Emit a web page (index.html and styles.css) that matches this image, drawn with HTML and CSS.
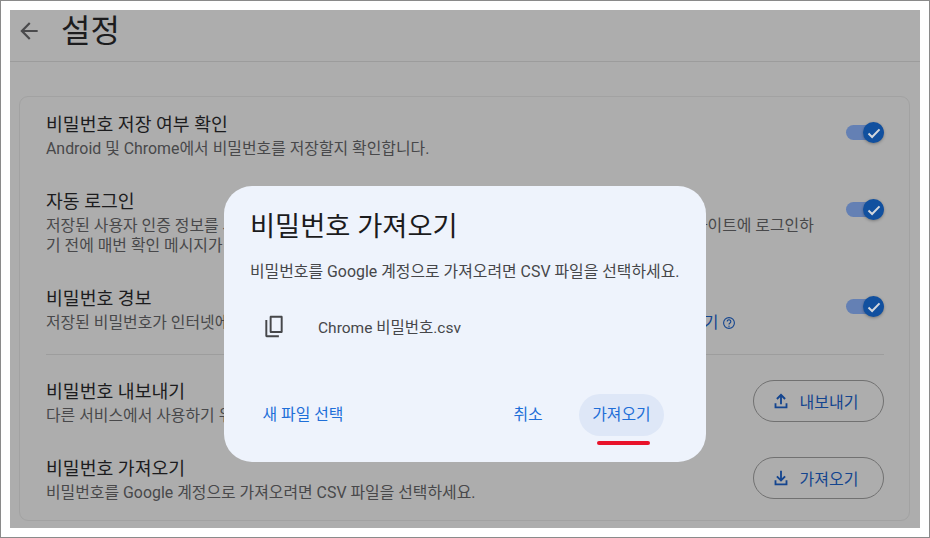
FILE: index.html
```html
<!DOCTYPE html>
<html lang="ko">
<head>
<meta charset="utf-8">
<title>설정</title>
<link rel="stylesheet" href="styles.css">
</head>
<body>
<div class="frame">
  <div class="page">
    <header class="topbar">
      <svg class="back" width="26" height="26" viewBox="0 0 24 24"><path d="M20 11H7.800l5.600-5.600L12 4l-8 8 8 8 1.400-1.400L7.800 13H20z"/></svg>
      <h1>설정</h1>
    </header>
    <main class="card">
      <section class="row">
        <div class="info">
          <h2>비밀번호 저장 여부 확인</h2>
          <p>Android 및 Chrome에서 비밀번호를 저장할지 확인합니다.</p>
        </div>
        <div class="toggle"><span class="knob"><svg width="14" height="14" viewBox="0 0 14 14"><path d="M1.500 7.600l3.600 3.400 7.400-7.600" /></svg></span></div>
      </section>
      <section class="row">
        <div class="info">
          <h2>자동 로그인</h2>
          <p>저장된 사용자 인증 정보를 사용하여 웹사이트에 자동으로 로그인합니다. 사용자가 사용 중지하면 웹사이트에 로그인하<br>기 전에 매번 확인 메시지가 표시됩니다.</p>
        </div>
        <div class="toggle"><span class="knob"><svg width="14" height="14" viewBox="0 0 14 14"><path d="M1.500 7.600l3.600 3.400 7.400-7.600" /></svg></span></div>
      </section>
      <section class="row">
        <div class="info">
          <h2>비밀번호 경보</h2>
          <p>저장된 비밀번호가 인터넷에 노출되었는지 확인하고 경보를 받아보세요. <a class="more">비밀번호 보안 자세히 알아보기</a> <svg class="help" width="14" height="14" viewBox="0 0 14 14"><circle cx="7" cy="7" r="5.400"/><path d="M5.200 5.600a1.800 1.800 0 1 1 2.800 1.500c-.7.4-1 .8-1 1.500"/><circle class="dot" cx="7" cy="10.200" r=".7"/></svg></p>
        </div>
        <div class="toggle"><span class="knob"><svg width="14" height="14" viewBox="0 0 14 14"><path d="M1.500 7.600l3.600 3.400 7.400-7.600" /></svg></span></div>
      </section>
      <hr class="divider">
      <section class="row">
        <div class="info">
          <h2>비밀번호 내보내기</h2>
          <p>다른 서비스에서 사용하기 위해 비밀번호를 내보냅니다.</p>
        </div>
        <button class="outline"><svg width="22" height="22" viewBox="0 0 24 24"><path d="M11 15.500V7.800L8.300 10.500 6.800 9 12 3.800 17.200 9l-1.500 1.500L13 7.800v7.700zM5 14.500V20h14v-5.500h-2V18H7v-3.500z"/></svg>내보내기</button>
      </section>
      <section class="row">
        <div class="info">
          <h2>비밀번호 가져오기</h2>
          <p>비밀번호를 Google 계정으로 가져오려면 CSV 파일을 선택하세요.</p>
        </div>
        <button class="outline"><svg width="22" height="22" viewBox="0 0 24 24"><path d="M11 4v8.200L8.300 9.500l-1.500 1.500L12 16.200l5.200-5.200-1.500-1.500-2.700 2.700V4zM5 14.500V20h14v-5.500h-2V18H7v-3.500z"/></svg>가져오기</button>
      </section>
    </main>
    <div class="dialog">
      <h3>비밀번호 가져오기</h3>
      <p class="desc">비밀번호를 Google 계정으로 가져오려면 CSV 파일을 선택하세요.</p>
      <div class="file">
        <svg width="26" height="26" viewBox="0 0 24 24"><path d="M9.200 2.500h9.600c.7 0 1.200.5 1.200 1.200v13.600c0 .7-.5 1.200-1.200 1.200H9.200c-.7 0-1.200-.5-1.200-1.200V3.700c0-.7.5-1.200 1.200-1.200zm.6 1.800v12.400h8.400V4.300zM4 6.500h1.800v14h10.700v1.800H5.200c-.7 0-1.200-.5-1.200-1.200z"/></svg>
        <span>Chrome 비밀번호.csv</span>
      </div>
      <div class="actions">
        <button class="text new">새 파일 선택</button>
        <button class="text cancel">취소</button>
        <div class="primary-wrap">
          <button class="text primary">가져오기</button>
          <span class="mark"></span>
        </div>
      </div>
    </div>
  </div>
</div>
</body>
</html>
```

FILE: styles.css
```css
* { box-sizing: border-box; }
html, body { margin: 0; padding: 0; }
body {
  width: 930px;
  height: 538px;
  overflow: hidden;
  font-family: Roboto, "Noto Sans CJK KR", sans-serif;
  background: #fff;
}
.frame {
  width: 930px;
  height: 538px;
  border: 1px solid #8a8a8a;
  padding: 9px;
}
.page {
  position: relative;
  width: 910px;
  height: 518px;
  background: #adadad;
  padding: 0 10px;
  display: flex;
  flex-direction: column;
  overflow: hidden;
}
.topbar {
  height: 52px;
  margin: 0 -10px;
  padding: 0 10px 10px 6px;
  display: flex;
  align-items: center;
  gap: 19px;
  border-bottom: 1px solid #9c9c9c;
  flex: none;
}
.back { fill: #4a4a4c; flex: none; }
.topbar h1 {
  margin: 0;
  font-size: 32px;
  font-weight: 400;
  color: #1c1c1e;
  line-height: 40px;
}
.card {
  margin-top: 34px;
  width: 891px;
  height: 425px;
  margin-left: -1px;
  border: 1px solid #a2a2a2;
  border-radius: 9px;
  padding: 0 25px 0 26px;
  flex: none;
}
.row {
  display: flex;
  align-items: flex-start;
  justify-content: space-between;
  padding: 14px 0 15px;
}
.info { flex: 1; min-width: 0; }
.info h2 {
  margin: 0;
  font-size: 18.300px;
  font-weight: 400;
  color: #1c1c1e;
  line-height: 28px;
}
.info p {
  margin: 0;
  font-size: 15.900px;
  color: #48484a;
  line-height: 20px;
  white-space: nowrap;
}
.more { color: #14458f; }
.help { fill: none; stroke: #14458f; stroke-width: 1.100; vertical-align: -2px; }
.help .dot { fill: #14458f; stroke: none; }
.toggle {
  position: relative;
  width: 38px;
  height: 15px;
  margin-top: 14px;
  border-radius: 8px;
  background: #6480b4;
  flex: none;
}
.knob {
  position: absolute;
  right: 0;
  top: -3px;
  width: 21px;
  height: 21px;
  border-radius: 50%;
  background: #11509f;
  box-shadow: 0 1px 3px rgba(0,0,0,.3);
  display: flex;
  align-items: center;
  justify-content: center;
}
.knob svg { fill: none; stroke: #d4d8de; stroke-width: 2; }
.divider {
  border: 0;
  border-top: 1px solid #9d9d9d;
  margin: 6px 0 9px;
}
.outline {
  width: 131px;
  height: 42px;
  margin-top: 2px;
  border: 1px solid #717171;
  border-radius: 21px;
  background: transparent;
  color: #14458f;
  font: inherit;
  font-size: 16px;
  display: flex;
  align-items: center;
  justify-content: center;
  gap: 8px;
  padding: 0 9px 0 0;
  flex: none;
}
.outline svg { fill: #14458f; }
.dialog {
  position: absolute;
  left: 214px;
  top: 176px;
  width: 482px;
  height: 276px;
  background: #eef3fc;
  border-radius: 28px;
  padding: 25px 26px 0;
  display: flex;
  flex-direction: column;
}
.dialog h3 {
  margin: 0;
  font-size: 27.300px;
  font-weight: 400;
  line-height: 32px;
  color: #1b1b1d;
}
.desc {
  margin: 18px 0 0;
  font-size: 15.900px;
  line-height: 22px;
  color: #46474a;
  white-space: nowrap;
}
.file {
  margin-top: 27px;
  display: flex;
  align-items: center;
  gap: 31px;
  padding-left: 11px;
  font-size: 15.500px;
  color: #46474a;
  height: 32px;
}
.file svg { fill: #46474a; flex: none; }
.actions {
  position: absolute;
  left: 26px;
  right: 42px;
  top: 208px;
  display: flex;
  align-items: center;
  height: 42px;
}
.text {
  border: 0;
  background: transparent;
  color: #1f6fd8;
  font: inherit;
  font-size: 15.900px;
  padding: 0 0 3px;
  height: 42px;
}
.new { width: 106px; margin-right: auto; text-align: center; }
.cancel { width: 60px; margin-right: 21px; }
.primary-wrap { position: relative; width: 85px; }
.primary {
  width: 85px;
  background: #dee7f7;
  border-radius: 21px;
  display: block;
}
.mark {
  position: absolute;
  left: 18px;
  top: 47px;
  width: 53px;
  height: 4px;
  border-radius: 2px;
  background: #e8122a;
}
```
